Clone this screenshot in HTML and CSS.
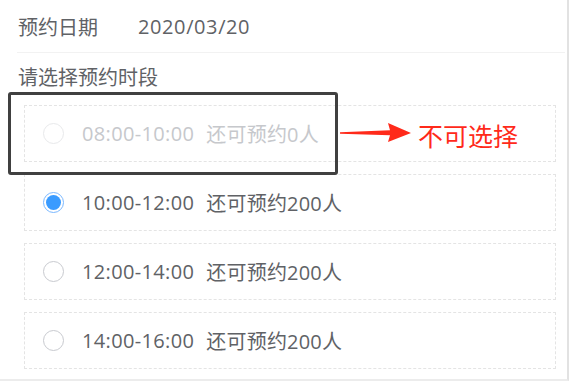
FILE: index.html
```html
<!DOCTYPE html>
<html lang="zh">
<head>
<meta charset="utf-8">
<link rel="stylesheet" href="styles.css">
</head>
<body>
<div class="page">
  <div class="date-row">
    <span class="date-label">预约日期</span>
    <span class="date-value">2020/03/20</span>
  </div>
  <div class="section-title">请选择预约时段</div>
  <div class="slots">
    <div class="slot disabled">
      <span class="radio"></span>
      <span class="time">08:00-10:00</span>
      <span class="remain">还可预约0人</span>
    </div>
    <div class="slot">
      <span class="radio checked"></span>
      <span class="time">10:00-12:00</span>
      <span class="remain">还可预约200人</span>
    </div>
    <div class="slot">
      <span class="radio"></span>
      <span class="time">12:00-14:00</span>
      <span class="remain">还可预约200人</span>
    </div>
    <div class="slot">
      <span class="radio"></span>
      <span class="time">14:00-16:00</span>
      <span class="remain">还可预约200人</span>
    </div>
  </div>

  <div class="anno-box"></div>
  <svg class="anno-arrow" width="72" height="22" viewBox="0 0 72 22">
    <polygon points="0,10.2 50,8.2 48,1 71,11 48,20 50,13.2 0,11.8" fill="#ff2a1a"/>
  </svg>
  <div class="anno-text">不可选择</div>
</div>
</body>
</html>
```
FILE: styles.css
```css
html, body {
  margin: 0;
  padding: 0;
  background: #ffffff;
}
body {
  font-family: "Open Sans", "Noto Sans CJK SC", sans-serif;
  color: #606266;
}
.page {
  position: relative;
  width: 569px;
  height: 381px;
  border-right: 2px solid #e2e2e2;
  border-bottom: 2px solid #ececec;
  padding-left: 17px;
  box-sizing: border-box;
  overflow: hidden;
}
.date-row {
  display: flex;
  align-items: center;
  height: 52px;
  border-bottom: 1px solid #f2f2f2;
  font-size: 20px;
  margin-right: 2px;
}
.date-label {
  width: 120px;
  padding-left: 1px;
}
.date-value {
  letter-spacing: 0.6px;
}
.section-title {
  font-size: 20px;
  height: 52px;
  line-height: 50px;
  padding-left: 1px;
}
.slots {
  display: flex;
  flex-direction: column;
  gap: 12px;
  margin-left: 7px;
  width: 532px;
}
.slot {
  display: flex;
  align-items: center;
  height: 57px;
  box-sizing: border-box;
  border: 1px dashed #e4e4e4;
  padding-left: 18px;
  font-size: 20px;
  color: #606266;
}
.radio {
  width: 21px;
  height: 21px;
  box-sizing: border-box;
  border: 1.5px solid #c8cacf;
  border-radius: 50%;
  margin-right: 18px;
  flex: none;
  position: relative;
}
.radio.checked {
  border: 1.5px solid #7ab8ff;
}
.radio.checked::after {
  content: "";
  position: absolute;
  left: 2px;
  top: 2px;
  right: 2px;
  bottom: 2px;
  border-radius: 50%;
  background: #3a9bff;
}
.slot.disabled {
  color: #c6c8cc;
}
.slot.disabled .radio {
  border-color: #e8e9eb;
}
.time {
  margin-right: 12px;
  letter-spacing: 0.35px;
}
.remain {
  letter-spacing: 0.2px;
}
.anno-box {
  position: absolute;
  left: 8px;
  top: 92px;
  width: 330px;
  height: 83px;
  box-sizing: border-box;
  border: 3px solid #404040;
  border-radius: 3px;
}
.anno-arrow {
  position: absolute;
  left: 340px;
  top: 122px;
}
.anno-text {
  position: absolute;
  left: 418px;
  top: 119px;
  font-size: 25px;
  line-height: 32px;
  color: #ff2a1a;
  font-family: "Noto Sans CJK SC", sans-serif;
}
```
